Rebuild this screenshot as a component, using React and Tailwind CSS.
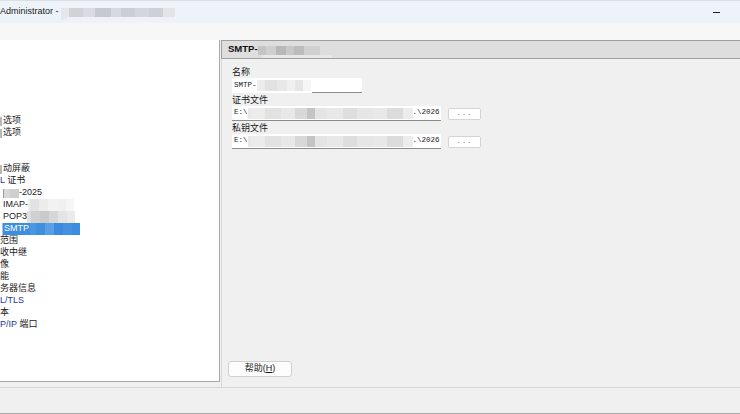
import React from 'react'

const cjk = { fontFamily: '"Liberation Sans", "Noto Sans CJK SC", sans-serif' }
const mono = { fontFamily: '"Liberation Mono", "Noto Sans CJK SC", monospace' }

// pixelated "blurred" placeholder: list of [width, colour]
function Blur({ cells, h = 'h-[10px]' }) {
  return (
    <div className={`flex shrink-0 ${h}`}>
      {cells.map(([w, c], i) => (
        <div key={i} style={{ width: w, background: c }} className="h-full" />
      ))}
    </div>
  )
}

const rows = [
  null, null, null, null, null, null,
  { t: '选项', bar: true },
  { t: '选项', bar: true },
  null, null,
  { t: '动屏蔽', bar: true },
  { t: 'L 证书', blue: 1 },
  { kind: 'y2025' },
  { kind: 'imap' },
  { kind: 'pop3' },
  { kind: 'smtp' },
  { t: '范围' },
  { t: '收中继' },
  { t: '像' },
  { t: '能' },
  { t: '务器信息' },
  { t: 'L/TLS', blue: 5 },
  { t: '本' },
  { t: 'P/IP 端口', blue: 4 },
]

function TreeRow({ r }) {
  if (!r) return <div className="h-[12px]" />
  if (r.kind === 'y2025')
    return (
      <div className="h-[12px] flex items-center pl-[3px] text-[9px] text-[#1a1a1a]">
        <Blur cells={[[1, '#9a9a9a'], [6, '#d8d8d8'], [9, '#cfcfcf']]} h="h-[9px]" />
        <span>-2025</span>
      </div>
    )
  if (r.kind === 'imap')
    return (
      <div className="h-[12px] flex items-center pl-[3px] text-[9px] text-[#1a1a1a]">
        <span>IMAP-</span>
        <Blur cells={[[2, '#f0f0f0'], [9, '#e2e2e2'], [9, '#ececec'], [9, '#f2f2f2'], [9, '#f0f0f0'], [8, '#f6f6f6']]} h="h-[12px]" />
      </div>
    )
  if (r.kind === 'pop3')
    return (
      <div className="h-[12px] flex items-center pl-[3px] text-[9px] text-[#1a1a1a]">
        <span>POP3</span>
        <Blur cells={[[4, '#e0e0e0'], [9, '#d0d0d0'], [9, '#cacaca'], [9, '#d6d6d6'], [9, '#e4e4e4'], [8, '#eaeaea']]} h="h-[12px]" />
      </div>
    )
  if (r.kind === 'smtp')
    return (
      <div className="h-[12px] flex items-center pl-[2px]">
        <div className="flex h-[12px] items-center bg-[#3c8ee0] text-white text-[9px] pl-[1px] border-l border-[#9ec6ee]">
          <span className="pr-[1px]">SMTP</span>
          <Blur cells={[[6, '#4a96e2'], [9, '#3f8fdf'], [9, '#5a9fe6'], [9, '#3a8bdd'], [9, '#4591e0'], [8, '#3c8de0']]} h="h-[12px]" />
        </div>
      </div>
    )
  const chars = [...r.t]
  return (
    <div className="h-[12px] flex items-center text-[9px] whitespace-nowrap" style={cjk}>
      {r.bar ? <div className="w-[2px] h-[9px] bg-[#b8b8b8] mr-[1px]" /> : null}
      <span>
        {chars.map((c, i) => (
          <span key={i} className={r.blue && i < r.blue ? 'text-[#24389a]' : 'text-[#1a1a1a]'}>{c}</span>
        ))}
      </span>
    </div>
  )
}

function FileRow({ label, tail }) {
  return (
    <>
      <div className="h-[12px] leading-[12px] text-[9px] text-[#1a1a1a] mt-[1px]" style={cjk}>{label}</div>
      <div className="flex items-center h-[15px]">
        <div className="w-[209px] h-[15px] bg-white border-b border-[#8c8c8c] flex items-center pl-[2px] overflow-hidden text-[7.5px] text-[#222]" style={mono}>
          <span>E:\</span>
          <Blur cells={[[3, '#e8e8e8'], [14, '#ececec'], [16, '#e2e2e2'], [14, '#e8e8e8'], [12, '#d8d8d8'], [8, '#c4c4c4'], [12, '#e4e4e4'], [16, '#e8e8e8'], [14, '#dedede'], [16, '#e6e6e6'], [14, '#e8e8e8'], [16, '#dcdcdc'], [10, '#ececec']]} h="h-[11px]" />
          <span className="whitespace-nowrap">{tail}</span>
        </div>
        <div className="ml-[7px] w-[33px] h-[12px] bg-white border border-[#d4d4d4] rounded-[2px] flex items-center justify-center text-[7px] text-[#666] tracking-[1px]" style={mono}>...</div>
      </div>
    </>
  )
}

export default function App() {
  return (
    <div className="w-[740px] h-[414px] flex flex-col bg-[#f0f0f0] overflow-hidden" style={cjk}>
      {/* title bar */}
      <div className="h-[23px] bg-[#eef3fa] border-t border-[#dcdfe4] flex items-center">
        <span className="text-[9px] text-[#1a1a1a] whitespace-nowrap" style={{ fontFamily: '"Liberation Sans", sans-serif' }}>Administrator -</span>
        <div className="ml-[2px] flex flex-col mt-[3px]">
          <Blur cells={[[8, '#e4e6ea'], [14, '#cfd2d7'], [12, '#d9dbe0'], [16, '#c6c9ce'], [10, '#d6d9de'], [14, '#cbced3'], [14, '#d3d6db'], [14, '#cdd0d5'], [12, '#e2e4e8']]} h="h-[9px]" />
          <Blur cells={[[6, '#e6e9ee'], [108, '#eef1f5']]} h="h-[3px]" />
        </div>
        <div className="ml-auto mr-[20px] w-[7px] h-[1px] bg-[#222]" />
      </div>
      <div className="h-[17px] bg-[#f7f7f7]" />

      {/* main */}
      <div className="h-[347px] flex">
        <div className="w-[220px] h-[342px] bg-white border-r border-b border-[#a8a8a8] pt-[3px] overflow-hidden">
          {rows.map((r, i) => (
            <TreeRow key={i} r={r} />
          ))}
        </div>
        <div className="flex-1 flex flex-col">
          <div className="h-[19px] bg-[#dedede] border-y border-[#a0a0a0] border-l ml-[1px] flex items-center pl-[6px]">
            <span className="text-[9.5px] font-bold text-[#111]" style={{ fontFamily: '"Liberation Sans", sans-serif' }}>SMTP-</span>
            <div className="flex flex-col mt-[4px]">
              <Blur cells={[[8, '#c4c4c4'], [10, '#cfcfcf'], [10, '#b8b8b8'], [8, '#c8c8c8'], [10, '#bcbcbc'], [16, '#d0d0d0']]} h="h-[9px]" />
              <Blur cells={[[4, '#dedede'], [70, '#e8e8e8']]} h="h-[3px]" />
            </div>
          </div>
          <div className="flex-1 flex flex-col pl-[10px] border-l border-[#d8d8d8] ml-[1px]">
            <div className="mt-[7px] h-[12px] leading-[12px] text-[9px] text-[#1a1a1a]" style={cjk}>名称</div>
            <div className="w-[130px] h-[15px] bg-white flex items-center pl-[2px] text-[7.5px] text-[#222] relative" style={mono}>
              <span>SMTP-</span>
              <Blur cells={[[8, '#ececec'], [12, '#e2e2e2'], [10, '#e8e8e8'], [8, '#f0f0f0'], [8, '#e6e6e6'], [8, '#f6f6f6']]} h="h-[11px]" />
              <div className="absolute right-0 bottom-0 w-[50px] h-[1px] bg-[#8c8c8c]" />
            </div>
            <FileRow label="证书文件" tail={'.\\2026'} />
            <FileRow label="私钥文件" tail={'.\\2026'} />
            <div className="mt-auto mb-[10px] ml-[-4px] w-[64px] h-[16px] bg-[#fdfdfd] border border-[#d0d0d0] rounded-[3px] flex items-center justify-center text-[9px] text-[#1a1a1a]" style={cjk}>
              帮助(<span className="underline">H</span>)
            </div>
          </div>
        </div>
      </div>

      {/* status area */}
      <div className="flex-1 border-t border-[#d6d6d6] border-b border-b-[#a8a8a8] bg-[#f0f0f0]" />
    </div>
  )
}
